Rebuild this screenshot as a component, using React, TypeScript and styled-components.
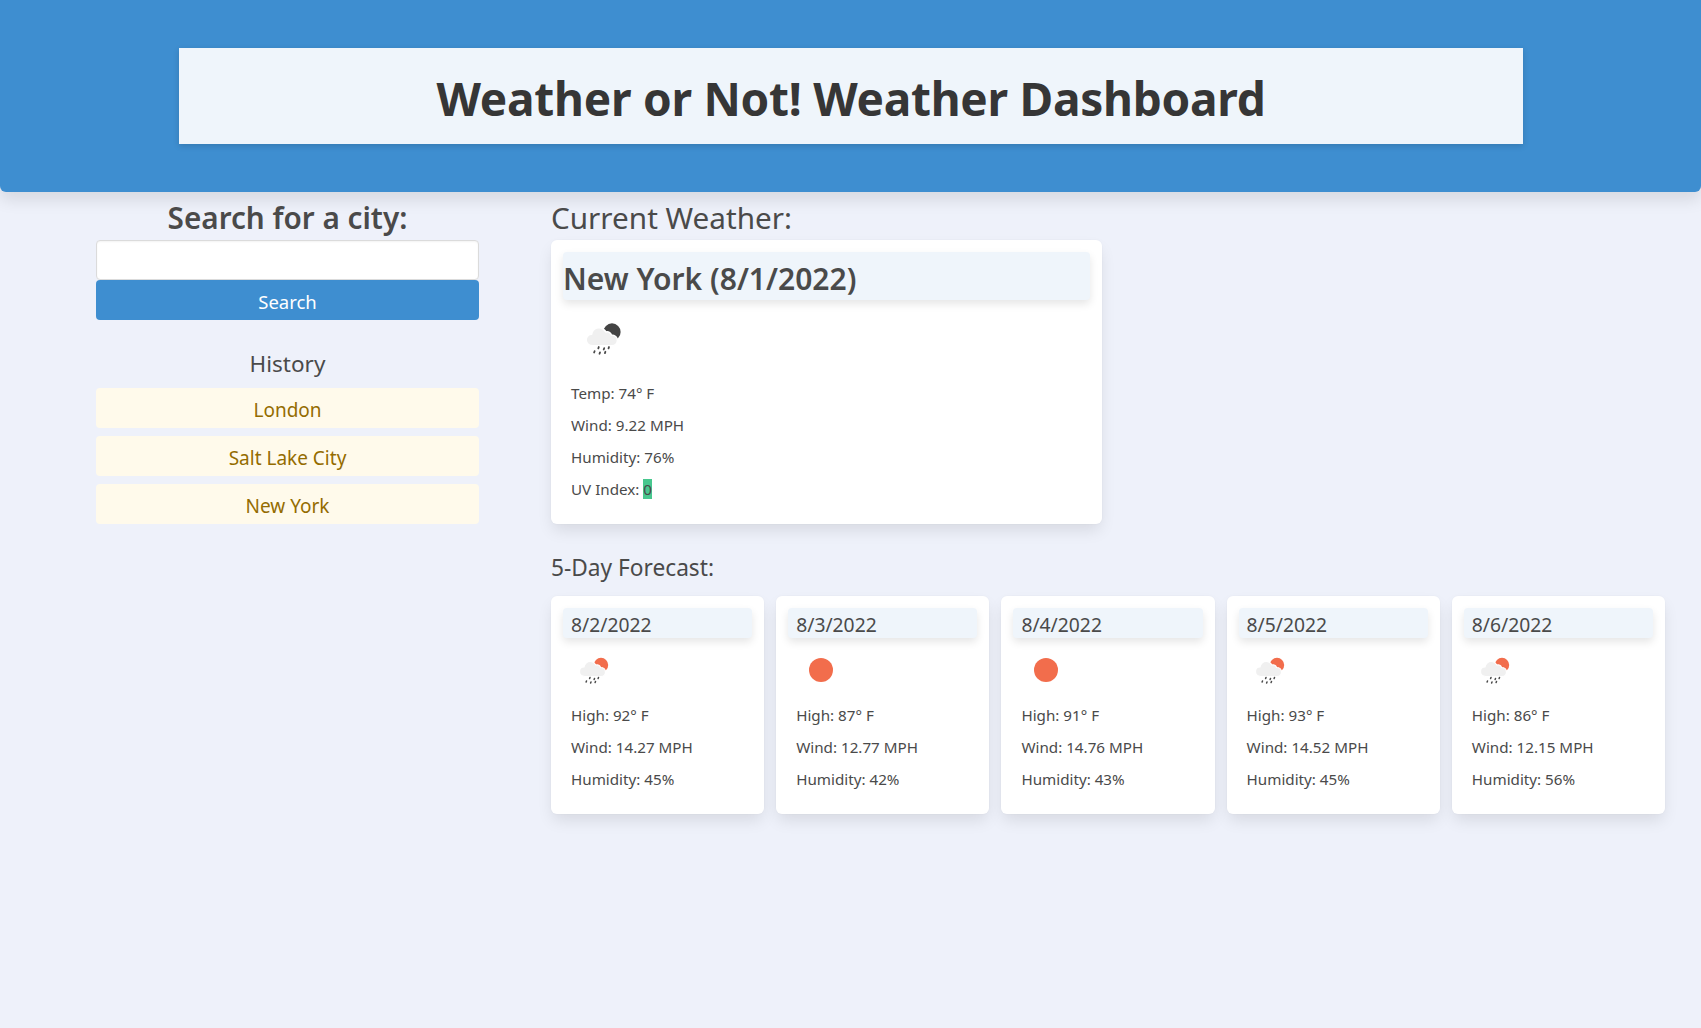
import styled, { createGlobalStyle } from "styled-components";

const current = { city: "New York", date: "8/1/2022", temp: 74, wind: 9.22, humidity: 76, uv: 0 };

const forecast = [
  { date: "8/2/2022", icon: "rain", high: 92, wind: 14.27, humidity: 45 },
  { date: "8/3/2022", icon: "clear", high: 87, wind: 12.77, humidity: 42 },
  { date: "8/4/2022", icon: "clear", high: 91, wind: 14.76, humidity: 43 },
  { date: "8/5/2022", icon: "rain", high: 93, wind: 14.52, humidity: 45 },
  { date: "8/6/2022", icon: "rain", high: 86, wind: 12.15, humidity: 56 },
];

const history = ["London", "Salt Lake City", "New York"];

const GlobalStyle = createGlobalStyle`
  html, body {
    margin: 0;
    background-color: #eef1fa;
    color: #4a4a4a;
    font-family: "Noto Sans", "Open Sans", sans-serif;
    font-size: 16px;
  }
`;

const Page = styled.div`
  min-height: 1028px;
`;

const Hero = styled.header`
  height: 192px;
  padding: 48px 178px 0 179px;
  box-sizing: border-box;
  background-color: #3e8ed0;
  border-radius: 0 0 6px 6px;
  box-shadow: 0 8px 16px rgba(10, 10, 10, 0.1);
`;

const TitleBox = styled.div`
  height: 96px;
  padding-top: 4px;
  box-sizing: border-box;
  display: flex;
  align-items: center;
  justify-content: center;
  background-color: #eff5fb;
  box-shadow: 0 2px 6px rgba(10, 10, 10, 0.15);
`;

const Title = styled.h1`
  margin: 0;
  color: #363636;
  font-size: 46px;
  font-weight: 700;
  letter-spacing: -0.26px;
  line-height: 1;
`;

const Main = styled.main`
  display: grid;
  grid-template-columns: 383px 1114px;
  column-gap: 72px;
  padding-left: 96px;
`;

const Sidebar = styled.aside`
  display: flex;
  flex-direction: column;
`;

const SearchTitle = styled.h2`
  margin: 0;
  height: 48px;
  padding-top: 4px;
  box-sizing: border-box;
  line-height: 44px;
  text-align: center;
  font-size: 29.7px;
  font-weight: 600;
`;

const SearchInput = styled.input`
  height: 40px;
  padding: 0 12px;
  box-sizing: border-box;
  background: #fff;
  border: 1px solid #dbdbdb;
  border-radius: 4px;
  box-shadow: inset 0 1px 2px rgba(10, 10, 10, 0.05);
`;

const SearchButton = styled.button`
  height: 40px;
  padding: 2px 0 0;
  border: 1px solid transparent;
  border-radius: 4px;
  background-color: #3e8ed0;
  color: #fff;
  font-family: inherit;
  font-size: 18.5px;
`;

const HistoryTitle = styled.h3`
  margin: 27px 0 7px;
  height: 34px;
  line-height: 34px;
  text-align: center;
  font-size: 22.5px;
  font-weight: 400;
`;

const HistoryList = styled.div`
  display: flex;
  flex-direction: column;
  gap: 8px;
`;

const HistoryButton = styled.button`
  height: 40px;
  padding: 3px 0 0;
  border: 0;
  border-radius: 4px;
  background-color: #fffaeb;
  color: #946c00;
  font-family: inherit;
  font-size: 19px;
`;

const Content = styled.section`
  display: flex;
  flex-direction: column;
`;

const CurrentHeading = styled.h2`
  margin: 0;
  height: 48px;
  padding-top: 4px;
  box-sizing: border-box;
  line-height: 44px;
  font-size: 29.7px;
  font-weight: 400;
`;

const Card = styled.div`
  box-sizing: border-box;
  padding: 12px;
  background: #fff;
  border-radius: 6px;
  box-shadow: 0 8px 16px -2px rgba(10, 10, 10, 0.1), 0 0 0 1px rgba(10, 10, 10, 0.01);
`;

const CurrentCard = styled(Card)`
  width: 551px;
  height: 284px;
`;

const CardHead = styled.div<{ $size: number; $weight: number; $indent: number; $height: number; $drop: number }>`
  height: ${(p) => p.$height}px;
  padding: ${(p) => p.$drop}px 0 0 ${(p) => p.$indent}px;
  box-sizing: border-box;
  line-height: ${(p) => p.$height - p.$drop}px;
  font-size: ${(p) => p.$size}px;
  font-weight: ${(p) => p.$weight};
  background-color: #eff5fb;
  border-radius: 4px;
  box-shadow: 0 4px 8px rgba(10, 10, 10, 0.1);
`;

const IconWrap = styled.div<{ $top: number; $bottom: number; $left: number }>`
  margin: ${(p) => p.$top}px 0 ${(p) => p.$bottom}px ${(p) => p.$left}px;
  display: flex;
`;

const Stat = styled.p`
  margin: 0 0 8px 8px;
  line-height: 24px;
  font-size: 15.2px;
`;

const UvBadge = styled.span`
  background-color: #48c78e;
`;

const ForecastHeading = styled.h3`
  margin: 27px 0 12px;
  height: 33px;
  line-height: 33px;
  font-size: 22.7px;
  font-weight: 400;
`;

const ForecastRow = styled.div`
  display: grid;
  grid-template-columns: repeat(5, 1fr);
  gap: 12px;
`;

const ForecastCard = styled(Card)`
  height: 218px;
`;

const WeatherIcon = ({ icon, tone, size }: { icon: string; tone: string; size: number }) => (
  <svg width={size} height={size} viewBox="0 0 50 50">
    {icon === "clear" ? (
      <circle cx="25" cy="25" r="12" fill={tone} />
    ) : (
      <>
        <circle cx="30" cy="20" r="7.2" fill={tone} />
        <path
          d="M14 31.5 C10.5 31.5 8.5 29 8.5 26.5 C8.5 24 10.5 22 13 22 C13.5 18.5 16.5 16 20 16.5 C22.5 16.9 24 18.5 25 20 C27 19.3 29 20.5 29.5 22.5 C32.5 22.5 34.5 24.5 34.5 27 C34.5 29.5 32.5 31.5 30 31.5 Z"
          fill="#f0f0f0"
          stroke="#fff"
          strokeWidth="1.2"
        />
        <g stroke="#4a4a4a" strokeWidth="1.5" strokeLinecap="round">
          <path d="M19 32.5 L18.6 33.6" />
          <path d="M23.5 33.5 L23.1 34.6" />
          <path d="M27.5 32.5 L27.1 33.6" />
          <path d="M15.5 36 L15.1 37.1" />
          <path d="M20 37 L19.6 38.1" />
          <path d="M24.5 36.5 L24.1 37.6" />
        </g>
      </>
    )}
  </svg>
);

const App = () => {
  return (
    <Page>
      <GlobalStyle />
      <Hero>
        <TitleBox>
          <Title>Weather or Not! Weather Dashboard</Title>
        </TitleBox>
      </Hero>
      <Main>
        <Sidebar>
          <SearchTitle>Search for a city:</SearchTitle>
          <SearchInput type="text" />
          <SearchButton>Search</SearchButton>
          <HistoryTitle>History</HistoryTitle>
          <HistoryList>
            {history.map((city) => (
              <HistoryButton key={city}>{city}</HistoryButton>
            ))}
          </HistoryList>
        </Sidebar>
        <Content>
          <CurrentHeading>Current Weather:</CurrentHeading>
          <CurrentCard>
            <CardHead $size={30} $weight={600} $indent={0} $height={48} $drop={5}>
              {current.city} ({current.date})
            </CardHead>
            <IconWrap $top={8} $bottom={13} $left={13}>
              <WeatherIcon icon="rain" tone="#444" size={60} />
            </IconWrap>
            <Stat>Temp: {current.temp}° F</Stat>
            <Stat>Wind: {current.wind} MPH</Stat>
            <Stat>Humidity: {current.humidity}%</Stat>
            <Stat>
              UV Index: <UvBadge>{current.uv}</UvBadge>
            </Stat>
          </CurrentCard>
          <ForecastHeading>5-Day Forecast:</ForecastHeading>
          <ForecastRow>
            {forecast.map((day) => (
              <ForecastCard key={day.date}>
                <CardHead $size={19.3} $weight={400} $indent={8} $height={30} $drop={4}>
                  {day.date}
                </CardHead>
                <IconWrap $top={7} $bottom={8} $left={8}>
                  <WeatherIcon icon={day.icon} tone="#f26d4c" size={50} />
                </IconWrap>
                <Stat>High: {day.high}° F</Stat>
                <Stat>Wind: {day.wind} MPH</Stat>
                <Stat>Humidity: {day.humidity}%</Stat>
              </ForecastCard>
            ))}
          </ForecastRow>
        </Content>
      </Main>
    </Page>
  );
};

export default App;
